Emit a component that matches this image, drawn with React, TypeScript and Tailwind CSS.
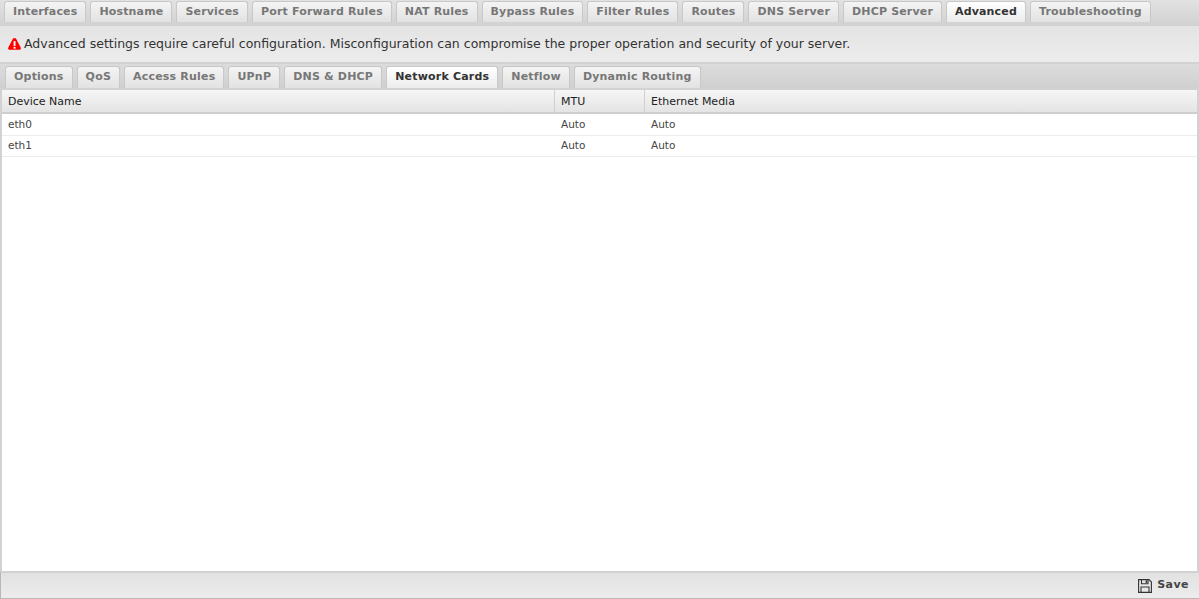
const topTabs = ["Interfaces","Hostname","Services","Port Forward Rules","NAT Rules","Bypass Rules","Filter Rules","Routes","DNS Server","DHCP Server","Advanced","Troubleshooting"];
const subTabs = ["Options","QoS","Access Rules","UPnP","DNS & DHCP","Network Cards","Netflow","Dynamic Routing"];

function Tab({ label, active, sub }: { label: string; active: boolean; sub?: boolean }) {
  const spacing = sub ? "tracking-[0.2px]" : "tracking-[0.16px]";
  return (
    <div
      className={
        (active
          ? "h-full px-[8px] flex items-center rounded-t-[3px] border border-b-0 border-[#c8c8c8] bg-gradient-to-b from-white to-[#ececec] text-[11px] font-bold text-[#333] whitespace-nowrap "
          : "h-full px-[8px] flex items-center rounded-t-[3px] border border-b-0 border-[#c8c8c8] bg-gradient-to-b from-[#f4f4f4] to-[#e2e2e2] text-[11px] font-bold text-[#777] whitespace-nowrap ") + spacing
      }
    >
      {label}
    </div>
  );
}

function Row({ a }: { a: string }) {
  return (
    <div className="flex h-[21px] shrink-0 items-center border-b border-[#ececec] text-[10.5px] text-[#444]">
      <div className="w-[553px] pl-[6px]">{a}</div>
      <div className="w-[90px] pl-[6px]">Auto</div>
      <div className="flex-1 pl-[6px]">Auto</div>
    </div>
  );
}

export default function App() {
  return (
    <div className="flex h-[599px] w-[1199px] flex-col overflow-hidden bg-white font-['DejaVu_Sans',sans-serif]">
      <div className="flex h-[24px] shrink-0 gap-[4px] bg-gradient-to-b from-[#e2e2e2] to-[#d2d2d2] pb-[2px] pl-[4px] pt-[1px]">
        {topTabs.map((t) => (
          <Tab key={t} label={t} active={t === "Advanced"} />
        ))}
      </div>
      <div className="flex h-[40px] shrink-0 items-center gap-[3px] border-y-2 border-[#d2d2d2] bg-gradient-to-b from-[#e4e4e4] to-[#ececec] pl-[8px] text-[12.5px] text-[#333]">
        <svg width="13" height="12" viewBox="0 0 13 12" className="shrink-0">
          <path d="M5.2 0.3 H7.8 L12.7 9.6 Q13.2 11.7 11.6 11.7 H1.4 Q-0.2 11.7 0.3 9.6 Z" fill="#f00" />
          <rect x="5.6" y="3.2" width="1.9" height="4.8" fill="#fff" />
          <rect x="5.6" y="8.9" width="1.9" height="1.8" fill="#fff" />
        </svg>
        <span className="whitespace-nowrap">Advanced settings require careful configuration. Misconfiguration can compromise the proper operation and security of your server.</span>
      </div>
      <div className="flex h-[24px] shrink-0 gap-[4px] bg-gradient-to-b from-[#dcdcdc] to-[#d0d0d0] pl-[5px] pt-[2px]">
        {subTabs.map((t) => (
          <Tab key={t} label={t} active={t === "Network Cards"} sub />
        ))}
      </div>
      <div className="flex min-h-0 flex-1 flex-col border-x-2 border-[#d2d2d2] border-t-2 border-t-[#d2d2d2] bg-white">
        <div className="mb-[1px] flex h-[24px] shrink-0 items-center border-b-2 border-b-[#cfcfcf] bg-gradient-to-b from-[#f6f6f6] to-[#e4e4e4] text-[11px] text-[#222]">
          <div className="flex h-full w-[553px] items-center border-r border-[#cfcfcf] pl-[6px] pt-[2px]">Device Name</div>
          <div className="flex h-full w-[90px] items-center border-r border-[#cfcfcf] pl-[6px] pt-[2px]">MTU</div>
          <div className="flex h-full items-center pl-[6px] pt-[2px]">Ethernet Media</div>
        </div>
        <Row a="eth0" />
        <Row a="eth1" />
      </div>
      <div className="flex h-[28px] shrink-0 items-center justify-end gap-[5px] border-t-2 border-[#d2d2d2] border-b border-b-[#c0b4b4] border-l border-l-[#c0b4b4] bg-gradient-to-b from-[#e2e2e2] to-[#ececec] pr-[10px] text-[11px] font-bold tracking-[0.45px] text-[#444]">
        <svg width="14" height="14" viewBox="0 0 14 14" fill="none" stroke="#333" strokeWidth="1.1" className="shrink-0">
          <path d="M0.6 0.6 H11 L13.4 3 V13.4 H0.6 Z" />
          <path d="M3.5 0.6 V4.8 H10 V0.6" />
          <rect x="7.6" y="1.5" width="1.5" height="2.4" fill="#333" stroke="none" />
          <path d="M3 13.4 V8 H11 V13.4" />
        </svg>
        <span>Save</span>
      </div>
    </div>
  );
}
